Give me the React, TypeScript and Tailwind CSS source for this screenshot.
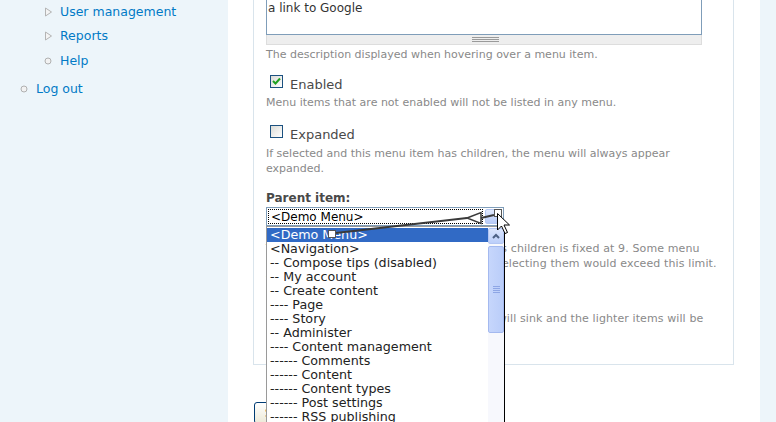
import React from "react";

const font = { fontFamily: '"DejaVu Sans", Verdana, sans-serif' };

const options = [
  "<Demo Menu>",
  "<Navigation>",
  "-- Compose tips (disabled)",
  "-- My account",
  "-- Create content",
  "---- Page",
  "---- Story",
  "-- Administer",
  "---- Content management",
  "------ Comments",
  "------ Content",
  "------ Content types",
  "------ Post settings",
  "------ RSS publishing",
  "------ Site building",
];

const Collapsed = () => (
  <svg width="9" height="10" viewBox="0 0 9 10" className="shrink-0">
    <path d="M1.5 1 L7.5 5 L1.5 9 Z" fill="#f4f4f4" stroke="#b4b4b4" strokeWidth="1" />
  </svg>
);

const Leaf = () => (
  <svg width="8" height="8" viewBox="0 0 8 8" className="shrink-0">
    <circle cx="4" cy="4" r="3" fill="#f2f2f2" stroke="#b0b0b0" strokeWidth="1" />
  </svg>
);

const Checkbox = ({ checked }: { checked?: boolean }) => (
  <div className="w-[13px] h-[13px] border border-[#1c5180] bg-gradient-to-br from-[#dcdcd7] to-white flex items-center justify-center shrink-0">
    {checked && (
      <svg width="9" height="9" viewBox="0 0 9 9">
        <path d="M1 4 L3.5 6.5 L8 1.5" fill="none" stroke="#21a121" strokeWidth="2" />
      </svg>
    )}
  </div>
);

export default function App() {
  return (
    <div className="relative flex w-[776px] h-[422px] overflow-hidden bg-white" style={font}>
      {/* left sidebar */}
      <aside className="w-[228px] shrink-0 bg-[#edf5fa] pl-[1px]">
        <ul className="pt-[1px] text-[12.5px] leading-[16px] text-[#027ac6]">
          <li className="flex items-center h-[22px] pl-[43px]">
            <Collapsed />
            <span className="ml-[7px]">User management</span>
          </li>
          <li className="flex items-center h-[22px] mt-[2px] pl-[43px]">
            <Collapsed />
            <span className="ml-[7px]">Reports</span>
          </li>
          <li className="flex items-center h-[22px] mt-[3px] pl-[43px]">
            <Leaf />
            <span className="ml-[8px]">Help</span>
          </li>
          <li className="flex items-center h-[22px] mt-[6px] pl-[19px]">
            <Leaf />
            <span className="ml-[8px]">Log out</span>
          </li>
        </ul>
      </aside>

      {/* main content */}
      <main className="flex-1 pl-[25px]">
        <div className="w-[481px] border-x border-b border-[#d9e4ec] px-[12px] pb-[23px]">
          {/* textarea */}
          <div className="w-[436px] h-[35px] border-x border-b border-[#7f9db9] overflow-hidden">
            <div className="pl-[1px] text-[12px] leading-[16px] text-[#333]">a link to Google</div>
          </div>
          <div className="w-[436px] h-[10px] bg-[#eeeeee] border-x border-b border-[#dddddd] flex justify-center items-center">
            <div className="flex flex-col gap-[1px] w-[27px] ml-[2px]">
              <div className="h-[1px] bg-[#9a9a9a]" />
              <div className="h-[1px] bg-[#9a9a9a]" />
              <div className="h-[1px] bg-[#9a9a9a]" />
            </div>
          </div>
          <div className="mt-[2px] text-[11px] leading-[15px] text-[#898989]">
            The description displayed when hovering over a menu item.
          </div>

          {/* enabled */}
          <div className="mt-[13px] flex items-start">
            <div className="ml-[4px]">
              <Checkbox checked />
            </div>
            <span className="ml-[7px] pt-[1px] text-[13px] leading-[18px] text-[#494949]">Enabled</span>
          </div>
          <div className="mt-[1px] text-[11px] leading-[15px] text-[#898989]">
            Menu items that are not enabled will not be listed in any menu.
          </div>

          {/* expanded */}
          <div className="mt-[15px] flex items-start">
            <div className="ml-[4px]">
              <Checkbox />
            </div>
            <span className="ml-[7px] pt-[1px] text-[13px] leading-[18px] text-[#494949]">Expanded</span>
          </div>
          <div className="mt-[2px] text-[11px] leading-[15px] text-[#898989]">
            If selected and this menu item has children, the menu will always appear
            <br />
            expanded.
          </div>

          {/* parent item */}
          <div className="mt-[14px] text-[12px] leading-[16px] font-bold text-[#494949]">Parent item:</div>
          <div className="relative mt-[1px] w-[238px] h-[19px] border border-[#7f9db9] bg-white flex">
            <div className="flex-1 m-[1px] border border-dotted border-black flex items-center pl-[2px] text-[12px] text-black">
              &lt;Demo Menu&gt;
            </div>
            <div className="w-[17px] m-[1px] rounded-[2px] bg-gradient-to-b from-[#e1eafe] to-[#b7cbf8] border border-[#b5c8f2]" />

            {/* open dropdown list */}
            <div className="absolute left-[-1px] top-[18px] w-[239px] h-[220px] bg-white border-l border-t border-[#9a9a9a] border-r-black border-r flex z-10">
              <ul className="flex-1 pt-[1px] text-[12.7px] leading-[14px] text-[#222]">
                {options.map((o, i) => (
                  <li
                    key={o}
                    className={
                      i === 0
                        ? "h-[14px] pl-[3px] bg-[#316ac5] text-white"
                        : "h-[14px] pl-[3px] whitespace-nowrap"
                    }
                  >
                    {o}
                  </li>
                ))}
              </ul>
              {/* scrollbar */}
              <div className="w-[16px] bg-[#f7f8fd] flex flex-col pt-[1px]">
                <div className="h-[16px] rounded-[2px] bg-gradient-to-b from-[#dbe5fd] to-[#bccffa] border border-[#b3c6f3] flex items-center justify-center">
                  <svg width="8" height="6" viewBox="0 0 8 6">
                    <path d="M1 5 L4 2 L7 5" fill="none" stroke="#4d6185" strokeWidth="2" />
                  </svg>
                </div>
                <div className="mt-[2px] h-[87px] rounded-[2px] bg-gradient-to-r from-[#c6d6fc] to-[#bacdf9] border border-[#a4b9ef] flex items-center justify-center">
                  <div className="flex flex-col gap-[1px] w-[7px]">
                    <div className="h-[1px] bg-[#8ea6e5]" />
                    <div className="h-[1px] bg-[#8ea6e5]" />
                    <div className="h-[1px] bg-[#8ea6e5]" />
                    <div className="h-[1px] bg-[#8ea6e5]" />
                  </div>
                </div>
              </div>
            </div>
          </div>
          <div className="mt-[15px] text-[11px] leading-[15px] tracking-[0.12px] text-[#898989]">
            The maximum depth for an item and all its children is fixed at 9. Some menu
            <br />
            items may not be available as parents if selecting them would exceed this limit.
          </div>

          {/* weight */}
          <div className="mt-[2px] text-[12px] leading-[16px] font-bold text-[#494949]">Weight:</div>
          <div className="mt-[1px] w-[60px] h-[19px] border border-[#7f9db9]" />
          <div className="mt-[2px] text-[11px] leading-[15px] tracking-[0.1px] text-[#898989]">
            Optional. In the menu, the heavier items will sink and the lighter items will be
            <br />
            positioned nearer the top.
          </div>
        </div>

        <button className="mt-[37px] ml-[1px] h-[22px] px-[10px] rounded-[3px] border border-[#003c74] bg-gradient-to-b from-white to-[#ece9d8] text-[12px] text-black">
          Save
        </button>
      </main>

      <div className="w-[26px] shrink-0" />
      {/* right sidebar */}
      <aside className="w-[17px] shrink-0 bg-[#edf5fa]" />

      {/* drag artifact and pointer */}
      <svg className="absolute left-0 top-0 pointer-events-none z-20" width="776" height="422">
        <line x1="336" y1="233" x2="467" y2="218" stroke="#3a3a3a" strokeWidth="2" />
        <rect x="328.5" y="230.5" width="7" height="7" fill="#fff" stroke="#555" />
        <path d="M467 218 L481 212.5 L481 223.5 Z" fill="#fff" stroke="#3a3a3a" strokeWidth="1.5" />
        <line x1="481" y1="218" x2="494" y2="215" stroke="#3a3a3a" strokeWidth="2" />
        <rect x="494.5" y="209.5" width="7" height="7" fill="#fff" stroke="#555" />
        <path
          d="M497.5 213.5 L497.5 230 L501.5 226 L505 233.5 L507.5 232.5 L504 225 L509.5 225 Z"
          fill="#fff"
          stroke="#000"
          strokeWidth="1"
          strokeLinejoin="miter"
        />
      </svg>
    </div>
  );
}
